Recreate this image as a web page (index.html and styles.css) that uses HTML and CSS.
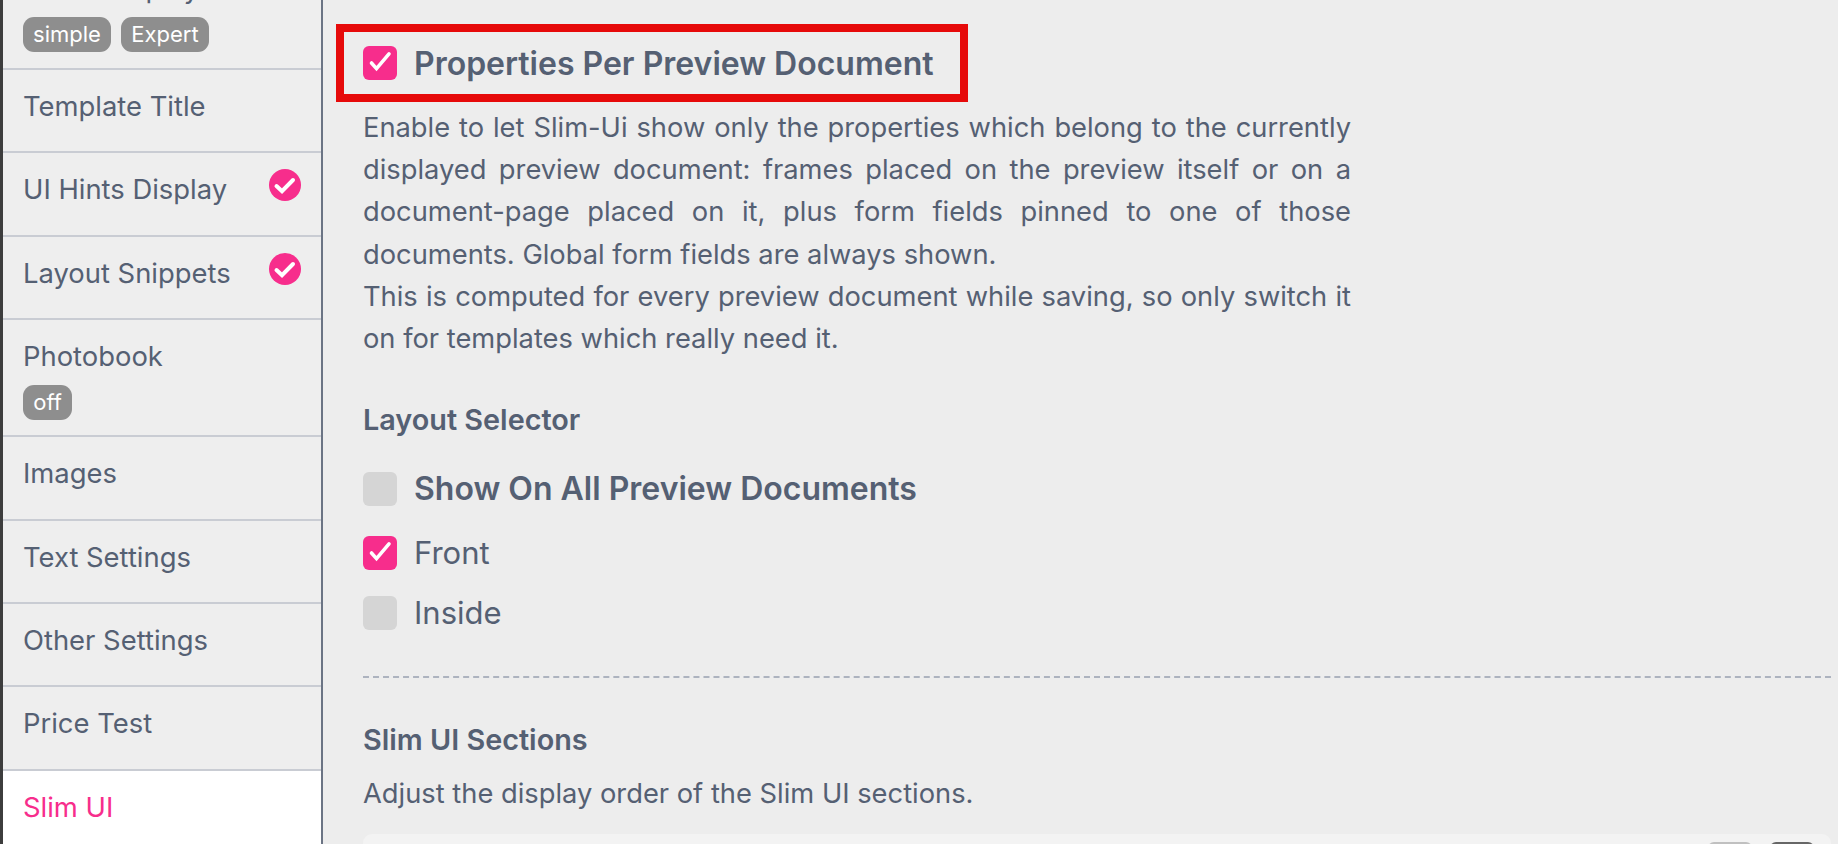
FILE: index.html
```html
<!DOCTYPE html>
<html lang="en">
<head>
<meta charset="utf-8">
<title>Slim UI</title>
<link rel="stylesheet" href="styles.css">
</head>
<body>
<div class="app">
  <nav class="side">
    <div class="row first">
      <div class="name">Mode Display</div>
      <div class="badges"><span class="badge">simple</span><span class="badge">Expert</span></div>
    </div>
    <div class="row"><div class="name">Template Title</div></div>
    <div class="row"><div class="name">UI Hints Display</div><svg class="done" viewBox="0 0 32 32"><circle cx="16" cy="16" r="16" fill="#f72d8c"/><path d="M7.5 17l5.5 5.2L24 11" fill="none" stroke="#fff" stroke-width="4" stroke-linecap="round"/></svg></div>
    <div class="row"><div class="name">Layout Snippets</div><svg class="done" viewBox="0 0 32 32"><circle cx="16" cy="16" r="16" fill="#f72d8c"/><path d="M7.5 17l5.5 5.2L24 11" fill="none" stroke="#fff" stroke-width="4" stroke-linecap="round"/></svg></div>
    <div class="row tall">
      <div class="name">Photobook</div>
      <div class="badges"><span class="badge">off</span></div>
    </div>
    <div class="row"><div class="name">Images</div></div>
    <div class="row"><div class="name">Text Settings</div></div>
    <div class="row"><div class="name">Other Settings</div></div>
    <div class="row"><div class="name">Price Test</div></div>
    <div class="row active"><div class="name">Slim UI</div></div>
  </nav>
  <main class="main">
    <div class="marked">
      <span class="box on"><svg viewBox="0 0 34 34"><path d="M8.5 17l5 5.6L26 7.8" fill="none" stroke="#fff" stroke-width="3.6" stroke-linecap="round"/></svg></span>
      <span class="big low">Properties Per Preview Document</span>
    </div>
    <p class="para">Enable to let Slim-Ui show only the properties which belong to the currently displayed preview document: frames placed on the preview itself or on a document-page placed on it, plus form fields pinned to one of those documents. Global form fields are always shown.</p>
    <p class="para">This is computed for every preview document while saving, so only switch it on for templates which really need it.</p>
    <h3 class="sub layout">Layout Selector</h3>
    <div class="check all"><span class="box"></span><span class="big">Show On All Preview Documents</span></div>
    <div class="check front"><span class="box on"><svg viewBox="0 0 34 34"><path d="M8.5 17l5 5.6L26 7.8" fill="none" stroke="#fff" stroke-width="3.6" stroke-linecap="round"/></svg></span><span class="plain">Front</span></div>
    <div class="check inside"><span class="box"></span><span class="plain">Inside</span></div>
    <hr class="rule">
    <h3 class="sub sections">Slim UI Sections</h3>
    <p class="hint">Adjust the display order of the Slim UI sections.</p>
    <div class="card"><span class="btn light"></span><span class="btn dark"></span></div>
  </main>
</div>
</body>
</html>
```
FILE: styles.css
```css
* { box-sizing: border-box; }
html, body { margin: 0; height: 100%; overflow: hidden; }
body { background: #ededed; color: #556073; font-family: Inter, "Liberation Sans", sans-serif; }
.app { display: flex; height: 844px; overflow: hidden; }
.side { width: 323px; flex: none; height: 844px; overflow: hidden; border-left: 3px solid #3d3d3d; border-right: 2px solid #6b7484; background: #eee; }
.row { height: 83.4px; padding: 18px 20px 0 20px; border-bottom: 2px solid #c9ccd3; display: flex; justify-content: space-between; align-items: flex-start; font-size: 27.4px; line-height: 36px; }
.row.first, .row.tall { display: block; }
.row.first { margin-top: -30px; height: 100px; padding-top: 0; }
.row.tall { height: 117px; }
.name { white-space: nowrap; }
.badges { display: flex; gap: 10px; margin: 11px 0 0 0; }
.badge { height: 35px; min-width: 49px; padding: 0 10px; border-radius: 11px; background: #8e8e8e; color: #fff; font-size: 22px; line-height: 34px; text-align: center; }
.row.first .badge { width: 88px; }
.done { width: 32px; height: 32px; margin-top: -2px; flex: none; }
.row.active { height: 160px; background: #fff; color: #f72d8c; border-bottom: 0; }
.main { flex: 1; padding: 24px 7px 0 40px; min-width: 0; }
.marked { display: flex; align-items: center; gap: 17px; width: 632px; height: 78px; margin-left: -27px; padding-left: 19px; border: 8px solid #e60a0a; }
.box { width: 34px; height: 34px; flex: none; border-radius: 6px; background: #d5d5d5; display: block; }
.box.on { background: #f72d8c; }
.box svg { display: block; width: 34px; height: 34px; }
.big { font-size: 32px; font-weight: 600; line-height: 36px; white-space: nowrap; }
.big.low { padding-top: 2px; }
.para { width: 988px; margin: 0; font-size: 27.3px; line-height: 42.2px; text-align: justify; }
.marked + .para { margin-top: 5px; }
.sub { margin: 0; font-size: 28.8px; font-weight: 600; line-height: 36px; }
.layout { margin-top: 41.5px; }
.check { display: flex; align-items: center; gap: 17px; height: 34px; }
.all { margin-top: 34px; }
.front { margin-top: 30px; }
.inside { margin-top: 26px; }
.plain { font-size: 31px; line-height: 34px; }
.rule { margin: 46px 0 0; height: 0; border: 0; border-top: 2px dashed #adb3bf; }
.sections { margin-top: 44px; }
.hint { margin: 18px 0 0; font-size: 27.3px; line-height: 36px; }
.card { margin-top: 22px; height: 60px; background: #f3f3f3; border-radius: 9px; display: flex; justify-content: flex-end; gap: 18px; padding: 8px 17px 0 0; }
.btn { width: 44px; height: 36px; border-radius: 6px; }
.btn.light { background: #c0c0c0; }
.btn.dark { background: #666; }
```
